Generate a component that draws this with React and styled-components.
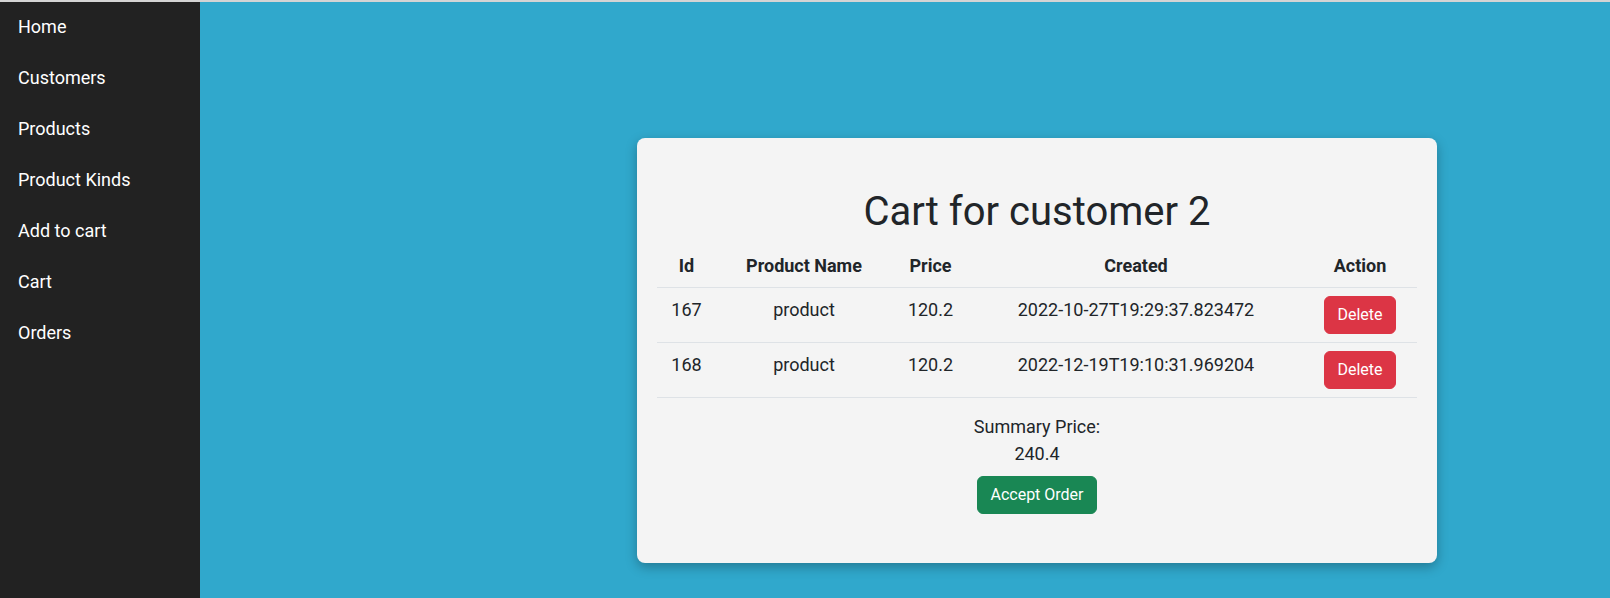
import React from "react";
import styled, { createGlobalStyle } from "styled-components";

const GlobalStyle = createGlobalStyle`
  html, body {
    margin: 0;
    padding: 0;
  }
  body {
    font-family: Roboto, "Liberation Sans", Arial, sans-serif;
    font-size: 18px;
    line-height: 1.5;
    color: #212529;
    background: #30a8cc;
  }
  * { box-sizing: border-box; }
`;

const Page = styled.div`
  display: flex;
  min-height: 100vh;
  border-top: 2px solid #d4d4d4;
`;

const Sidebar = styled.nav`
  width: 200px;
  flex-shrink: 0;
  background: #222222;
  display: flex;
  flex-direction: column;
`;

const NavItem = styled.a`
  display: block;
  padding: 11.3px 18px 12.7px;
  font-size: 18px;
  line-height: 27px;
  color: #ffffff;
  text-decoration: none;
`;

const Main = styled.main`
  flex: 1;
  padding: 136px 0 0 437px;
`;

const Card = styled.section`
  width: 800px;
  background: #f4f4f4;
  border-radius: 8px;
  box-shadow: 0 4px 12px rgba(0, 0, 0, 0.28);
  padding: 50px 20px 49px;
  display: flex;
  flex-direction: column;
  align-items: center;
`;

const Title = styled.h1`
  margin: 0 0 8px;
  font-size: 40px;
  line-height: 48px;
  font-weight: 400;
  color: #212529;
  text-align: center;
`;

const Table = styled.table`
  width: 760px;
  table-layout: fixed;
  border-collapse: collapse;
  text-align: center;
`;

const Th = styled.th`
  padding: 8px;
  font-weight: 700;
  line-height: 27px;
  border-bottom: 1px solid #dee2e6;
  vertical-align: bottom;
`;

const Td = styled.td`
  padding: 8px;
  line-height: 27px;
  border-bottom: 1px solid #dee2e6;
  vertical-align: top;
  white-space: nowrap;
`;

const Button = styled.button`
  font-family: Roboto, "Liberation Sans", Arial, sans-serif;
  font-size: 16px;
  line-height: 24px;
  padding: 6px 12px;
  border: 1px solid ${(p) => p.$bg};
  border-radius: 6px;
  background: ${(p) => p.$bg};
  color: #ffffff;
  cursor: pointer;
`;

const Summary = styled.div`
  margin-top: 15px;
  display: flex;
  flex-direction: column;
  align-items: center;
`;

const SummaryLine = styled.div`
  line-height: 27px;
`;

const ActionRow = styled.div`
  margin-top: 8.6px;
`;

const navItems = ["Home", "Customers", "Products", "Product Kinds", "Add to cart", "Cart", "Orders"];

const rows = [
  { id: 167, name: "product", price: "120.2", created: "2022-10-27T19:29:37.823472" },
  { id: 168, name: "product", price: "120.2", created: "2022-12-19T19:10:31.969204" },
];

const colWidths = [59, 176, 77, 334, 114];

export default function App() {
  return (
    <>
      <GlobalStyle />
      <Page>
        <Sidebar>
          {navItems.map((item) => (
            <NavItem key={item} href="#">
              {item}
            </NavItem>
          ))}
        </Sidebar>
        <Main>
          <Card>
            <Title>Cart for customer 2</Title>
            <Table>
              <colgroup>
                {colWidths.map((w, i) => (
                  <col key={i} style={{ width: w }} />
                ))}
              </colgroup>
              <thead>
                <tr>
                  <Th>Id</Th>
                  <Th>Product Name</Th>
                  <Th>Price</Th>
                  <Th>Created</Th>
                  <Th>Action</Th>
                </tr>
              </thead>
              <tbody>
                {rows.map((r) => (
                  <tr key={r.id}>
                    <Td>{r.id}</Td>
                    <Td>{r.name}</Td>
                    <Td>{r.price}</Td>
                    <Td>{r.created}</Td>
                    <Td>
                      <Button $bg="#dc3545">Delete</Button>
                    </Td>
                  </tr>
                ))}
              </tbody>
            </Table>
            <Summary>
              <SummaryLine>Summary Price:</SummaryLine>
              <SummaryLine>240.4</SummaryLine>
              <ActionRow>
                <Button $bg="#198754">Accept Order</Button>
              </ActionRow>
            </Summary>
          </Card>
        </Main>
      </Page>
    </>
  );
}
